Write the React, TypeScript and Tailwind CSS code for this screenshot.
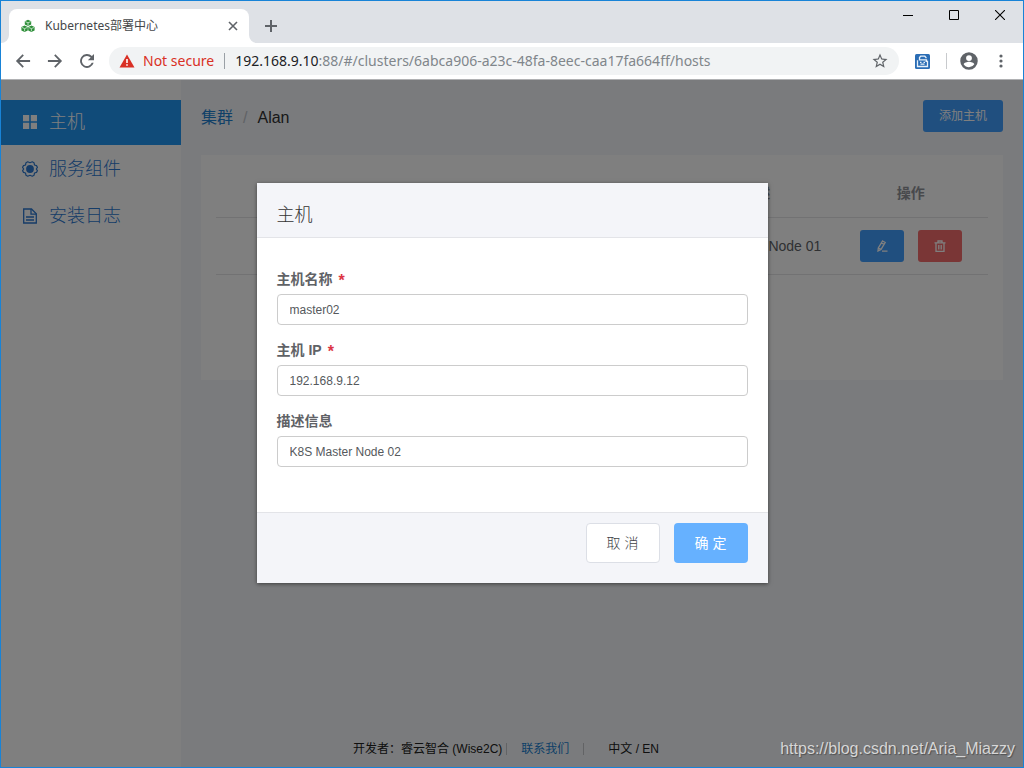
import type { FormEvent, ReactNode } from 'react'

const CLUSTER = '6abca906-a23c-48fa-8eec-caa17fa664ff'

interface NavItem {
  label: string
  href: string
  icon: ReactNode
  active?: boolean
}

interface Host {
  name: string
  ip: string
  role: string
  description: string
}

const hosts: Host[] = [
  { name: 'master01', ip: '192.168.9.11', role: 'Master', description: 'K8S Master Node 01' },
]

const columns = ['主机名称', '主机 IP', '组件', '描述', '操作']

// ── Icons ──────────────────────────────────────────────────────

function GridIcon() {
  return (
    <svg width="16" height="16" viewBox="0 0 16 16" fill="currentColor">
      <path d="M1 1h6.200v6.200H1zM8.800 1H15v6.200H8.800zM1 8.800h6.200V15H1zM8.800 8.800H15V15H8.800z" />
    </svg>
  )
}

function CogIcon() {
  return (
    <svg width="16" height="16" viewBox="0 0 16 16" fill="none" stroke="currentColor" strokeWidth="1.200" strokeLinejoin="round">
      <path d="M5.700.8 8 1.700l2.300-.9L12 1.700l.5 2.300 2 .6.900 1.700L14.300 8l1.100 1.700-.9 1.700-2 .6-.5 2.300-1.700.9L8 14.300l-2.300.9L4 14.300 3.500 12l-2-.6L.6 9.700 1.700 8 .6 6.300l.9-1.700 2-.6L4 1.700z" />
      <circle cx="8" cy="8" r="3.900" fill="currentColor" stroke="none" />
    </svg>
  )
}

function DocIcon() {
  return (
    <svg width="16" height="16" viewBox="0 0 16 16" fill="none" stroke="currentColor" strokeWidth="1.300">
      <path d="M1.700 1h7.800l4.800 4.800V15H1.700z" />
      <path d="M9 1v5.200h5.300M4 9h8M4 12h8" />
    </svg>
  )
}

function EditIcon() {
  return (
    <svg width="12" height="12" viewBox="0 0 12 12" fill="none" stroke="currentColor" strokeWidth="1.300">
      <path d="M6.600 1 9.200 2.500 5 9.400 2 11 2.300 8zM5.500 2.900 8.100 4.400M2.300 8 5 9.400M6 11.200h5.500" />
    </svg>
  )
}

function TrashIcon() {
  return (
    <svg width="12" height="12" viewBox="0 0 12 12" fill="none" stroke="currentColor" strokeWidth="1.300">
      <path d="M.5 2.800h11M4 2.800V1h4v1.800M2 2.800v8.600h8V2.800M4.800 5v4.400M7.200 5v4.400" />
    </svg>
  )
}

function CubesIcon() {
  return (
    <svg width="14" height="14" viewBox="0 0 14 14">
      <path fill="#2f8f3a" d="M7 .8 10.200 2.200v3.300L7 7 3.800 5.500V2.200zM3.600 6.600 6.800 8v3.400L3.600 13 .4 11.400V8zM10.400 6.600 13.600 8v3.400L10.400 13 7.200 11.400V8z" />
      <path fill="none" stroke="#d6efd8" strokeWidth=".8" d="M4.200 2.600 7 3.800l2.800-1.200M7 3.800v2.700M.9 8.400l2.700 1.200 2.800-1.200M7.700 8.400l2.700 1.200 2.800-1.200M3.600 9.600v2.700M10.400 9.600v2.700" />
    </svg>
  )
}

function ToolIcon({ d }: { d: string }) {
  return (
    <svg width="20" height="20" viewBox="0 0 24 24" fill="#5f6368">
      <path d={d} />
    </svg>
  )
}

const BACK = 'M20.500 10.700H7.800l5.200-5.200L11.500 3.900 3.500 12l8 8.100 1.500-1.600-5.200-5.200h12.700z'
const FORWARD = 'M3.500 10.700h12.700L11 5.500l1.500-1.600 8 8.100-8 8.100-1.500-1.600 5.200-5.200H3.500z'
const RELOAD =
  'M17.900 6.100A8.300 8.300 0 1 0 20 14.200h-2.300a6.100 6.100 0 1 1-1.300-6.500L13 11.100h7.400V3.600z'
const STAR =
  'M22 9.240l-7.190-.62L12 2 9.190 8.630 2 9.240l5.460 4.730L5.820 21 12 17.270 18.180 21l-1.630-7.030L22 9.240zM12 15.400l-3.760 2.270 1-4.280-3.320-2.880 4.380-.38L12 6.100l1.710 4.040 4.380.38-3.320 2.880 1 4.280L12 15.400z'

// ── Browser frame ──────────────────────────────────────────────

function TabStrip() {
  return (
    <div className="flex h-[42px] items-end bg-[#dee1e6]">
      <svg width="8" height="8" viewBox="0 0 8 8" fill="#fff">
        <path d="M8 0v8H0a8 8 0 0 0 8-8z" />
      </svg>
      <div className="flex h-[34px] w-60 items-center rounded-t-lg bg-white pl-3 pr-[11px]">
        <CubesIcon />
        <span className="ml-2.5 flex-1 truncate text-xs text-[#45474a]">Kubernetes部署中心</span>
        <button type="button" aria-label="Close tab">
          <svg width="10" height="10" viewBox="0 0 10 10" stroke="#5f6368" strokeWidth="1.600">
            <path d="M1 1l8 8M9 1l-8 8" />
          </svg>
        </button>
      </div>
      <svg width="8" height="8" viewBox="0 0 8 8" fill="#fff">
        <path d="M0 0v8h8a8 8 0 0 1-8-8z" />
      </svg>
      <button type="button" aria-label="New tab" className="flex h-[34px] w-7 items-center justify-center">
        <svg width="12" height="12" viewBox="0 0 12 12" stroke="#5f6368" strokeWidth="2">
          <path d="M6 0v12M0 6h12" />
        </svg>
      </button>
      <div className="ml-auto flex self-start text-black">
        <button type="button" aria-label="Minimize" className="flex h-7 w-[46px] items-center justify-center">
          <svg width="10" height="10" viewBox="0 0 10 10" stroke="currentColor">
            <path d="M0 5.500h10" />
          </svg>
        </button>
        <button type="button" aria-label="Maximize" className="flex h-7 w-[46px] items-center justify-center">
          <svg width="10" height="10" viewBox="0 0 10 10" fill="none" stroke="currentColor">
            <path d="M.5.5h9v9h-9z" />
          </svg>
        </button>
        <button type="button" aria-label="Close" className="flex h-7 w-[46px] items-center justify-center">
          <svg width="10" height="10" viewBox="0 0 10 10" stroke="currentColor" strokeWidth="1.100">
            <path d="M0 0l10 10M10 0L0 10" />
          </svg>
        </button>
      </div>
    </div>
  )
}

function Toolbar() {
  return (
    <div className="flex h-[37px] items-center border-b border-[#b0b1b3] bg-white pl-3">
      <div className="flex gap-3">
        <button type="button" aria-label="Back"><ToolIcon d={BACK} /></button>
        <button type="button" aria-label="Forward"><ToolIcon d={FORWARD} /></button>
        <button type="button" aria-label="Reload"><ToolIcon d={RELOAD} /></button>
      </div>
      <div className="ml-3 flex h-7 min-w-0 flex-1 items-center rounded-full bg-[#f1f3f4] px-2.5 text-sm">
        <svg width="16" height="14" viewBox="0 0 16 14" className="shrink-0">
          <path fill="#d93025" d="M8 .5 15.500 13.500H.5z" />
          <path fill="#fff" d="M7.200 5h1.600v4H7.200zM7.200 10.200h1.600v1.600H7.200z" />
        </svg>
        <span className="ml-2 shrink-0 text-[#d93025]">Not secure</span>
        <span className="mx-2.5 h-4 w-px shrink-0 bg-[#9aa0a6]" />
        <span className="flex-1 truncate text-[#80868b]">
          <span className="text-[#202124]">192.168.9.10</span>:88/#/clusters/{CLUSTER}/hosts
        </span>
        <button type="button" aria-label="Bookmark this page">
          <svg width="18" height="18" viewBox="0 0 24 24" fill="#5f6368"><path d={STAR} /></svg>
        </button>
      </div>
      <button type="button" aria-label="Extension" className="ml-4">
        <svg width="15" height="15" viewBox="0 0 15 15" fill="none">
          <rect width="15" height="15" rx="1.500" fill="#2a6db5" />
          <path stroke="#e8f1fa" strokeWidth="1.300" d="M11 4.200V3.500L9.800 2.200H5.700L4.500 3.500v2.300h7v1.500M2.500 6.200v6.300h10V7.300h-2M5 8.300h1.500M8.500 8.300H10M5.500 10.200h4" />
        </svg>
      </button>
      <span className="ml-4 h-4 w-px bg-[#c8cacd]" />
      <button type="button" aria-label="Profile" className="ml-3">
        <svg width="20" height="20" viewBox="0 0 24 24" fill="#5f6368">
          <path d="M12 1.500a10.500 10.500 0 1 0 0 21 10.500 10.500 0 0 0 0-21zM12 5a3.500 3.500 0 1 1 0 7 3.500 3.500 0 0 1 0-7zm0 14.500c-2.700 0-5-1.300-6.400-3.500.1-2 4.300-3.100 6.400-3.100s6.300 1.100 6.400 3.100A7.600 7.600 0 0 1 12 19.500z" />
        </svg>
      </button>
      <button type="button" aria-label="Menu" className="mx-3">
        <svg width="20" height="20" viewBox="0 0 20 20" fill="#5f6368">
          <circle cx="10" cy="5" r="1.600" />
          <circle cx="10" cy="10" r="1.600" />
          <circle cx="10" cy="15" r="1.600" />
        </svg>
      </button>
    </div>
  )
}

// ── Page ───────────────────────────────────────────────────────

const navItems: NavItem[] = [
  { label: '主机', href: '#hosts', icon: <GridIcon />, active: true },
  { label: '服务组件', href: '#components', icon: <CogIcon /> },
  { label: '安装日志', href: '#logs', icon: <DocIcon /> },
]

function Sidebar() {
  return (
    <nav className="col-start-1 row-span-2 row-start-1 flex flex-col gap-0.5 bg-white pt-5">
      {navItems.map((item) => (
        <a
          key={item.href}
          href={item.href}
          className={`flex h-[45px] items-center gap-[11px] pb-0.5 pl-[21px] text-lg font-light ${
            item.active ? 'bg-[#2196f3] text-white' : 'text-[#2c78d0]'
          }`}
        >
          {item.icon}
          {item.label}
        </a>
      ))}
    </nav>
  )
}

function HostTable() {
  return (
    <div className="mt-[23px] bg-white px-[15px] pb-[105px] pt-3.5">
      <table className="w-full table-fixed text-center text-sm text-[#606266]">
        <thead>
          <tr className="h-12 border-b border-[#e4e5e7] text-[#909399]">
            {columns.map((c) => <th key={c} className="font-bold">{c}</th>)}
          </tr>
        </thead>
        <tbody>
          {hosts.map((h) => (
            <tr key={h.name} className="h-[57px] border-b border-[#e4e5e7]">
              <td>{h.name}</td>
              <td>{h.ip}</td>
              <td>{h.role}</td>
              <td>{h.description}</td>
              <td>
                <div className="flex justify-center gap-3.5 text-white">
                  <button type="button" aria-label="编辑" className="flex h-8 w-11 items-center justify-center rounded-[3px] bg-[#409eff]">
                    <EditIcon />
                  </button>
                  <button type="button" aria-label="删除" className="flex h-8 w-11 items-center justify-center rounded-[3px] bg-[#f56c6c]">
                    <TrashIcon />
                  </button>
                </div>
              </td>
            </tr>
          ))}
        </tbody>
      </table>
    </div>
  )
}

function PageFooter() {
  return (
    <footer className="col-span-2 col-start-1 row-start-2 flex items-center justify-center pb-2 pr-3 text-xs leading-5 text-[#202020]">
      <span>开发者：睿云智合 (Wise2C)</span>
      <span className="ml-1 h-3 w-px bg-[#c4c6ca]" />
      <a href="#contact" className="ml-3.5 text-[#2080d0]">联系我们</a>
      <span className="ml-3.5 h-3 w-px bg-[#c4c6ca]" />
      <a href="#lang" className="ml-6">中文 / EN</a>
    </footer>
  )
}

// ── Dialog ─────────────────────────────────────────────────────

interface FieldProps {
  id: string
  label: string
  value: string
  required?: boolean
}

function Field({ id, label, value, required }: FieldProps) {
  return (
    <div className="flex flex-col gap-[5px]">
      <label htmlFor={id} className="flex items-center text-sm font-bold leading-5 text-[#606266]">
        {label}
        {required && <span className="ml-1.5 h-4 text-base leading-5 text-[#dc3545]">*</span>}
      </label>
      <input
        id={id}
        type="text"
        defaultValue={value}
        required={required}
        className="h-[31px] w-full rounded border border-[#cccccc] bg-white px-3 text-xs text-[#55595c] outline-none"
      />
    </div>
  )
}

function HostDialog() {
  const submit = (e: FormEvent) => e.preventDefault()

  return (
    <form
      role="dialog"
      aria-labelledby="dialog-title"
      onSubmit={submit}
      className="w-1/2 bg-white shadow-[0_1px_4px_rgba(0,0,0,0.5)]"
    >
      <div className="border-b border-[#e3e4e8] bg-[#f4f5f9] px-5 pb-2 pt-[18px]">
        <h4 id="dialog-title" className="text-lg font-light text-[#333333]">主机</h4>
      </div>
      <div className="flex flex-col gap-[15px] px-5 pb-[45px] pt-[31px]">
        <Field id="host-name" label="主机名称" value="master02" required />
        <Field id="host-ip" label="主机 IP" value="192.168.9.12" required />
        <Field id="host-desc" label="描述信息" value="K8S Master Node 02" />
      </div>
      <div className="flex justify-end gap-3.5 border-t border-[#e3e4e8] bg-[#f4f5f9] px-5 pb-5 pt-2.5 text-sm">
        <button type="button" className="h-10 w-[74px] rounded border border-[#dcdfe6] bg-white font-light text-[#404246]">取 消</button>
        <button type="submit" className="h-10 w-[74px] rounded bg-[#66b1ff] text-white">确 定</button>
      </div>
    </form>
  )
}

export default function App() {
  return (
    <div className="flex min-h-screen flex-col border border-[#1883d7] font-['Liberation_Sans','Noto_Sans_CJK_SC',sans-serif]">
      <header className="font-['Noto_Sans','Noto_Sans_CJK_SC',sans-serif]">
        <TabStrip />
        <Toolbar />
      </header>
      <div className="relative grid flex-1 grid-cols-[180px_1fr] grid-rows-[1fr_auto] bg-[#f5f7fa]">
        <Sidebar />
        <main className="col-start-2 row-start-1 p-5">
          <div className="flex items-center justify-between">
            <div className="flex items-center gap-2.5 pt-1 text-base">
              <a href="#clusters" className="text-[#2080d0]">集群</a>
              <span className="text-[#c0c4cc]">/</span>
              <span className="text-[#303133]">Alan</span>
            </div>
            <button type="button" className="h-8 w-20 rounded-[3px] bg-[#409eff] text-xs text-white">添加主机</button>
          </div>
          <HostTable />
        </main>
        <PageFooter />
        <div className="absolute inset-0 flex items-start justify-center bg-black/50 pt-[103px]">
          <HostDialog />
        </div>
        <div className="absolute bottom-1.5 right-2 text-base text-[#d6d6d6] [text-shadow:1px_1px_1px_rgba(0,0,0,0.35)]">
          https://blog.csdn.net/Aria_Miazzy
        </div>
      </div>
    </div>
  )
}
